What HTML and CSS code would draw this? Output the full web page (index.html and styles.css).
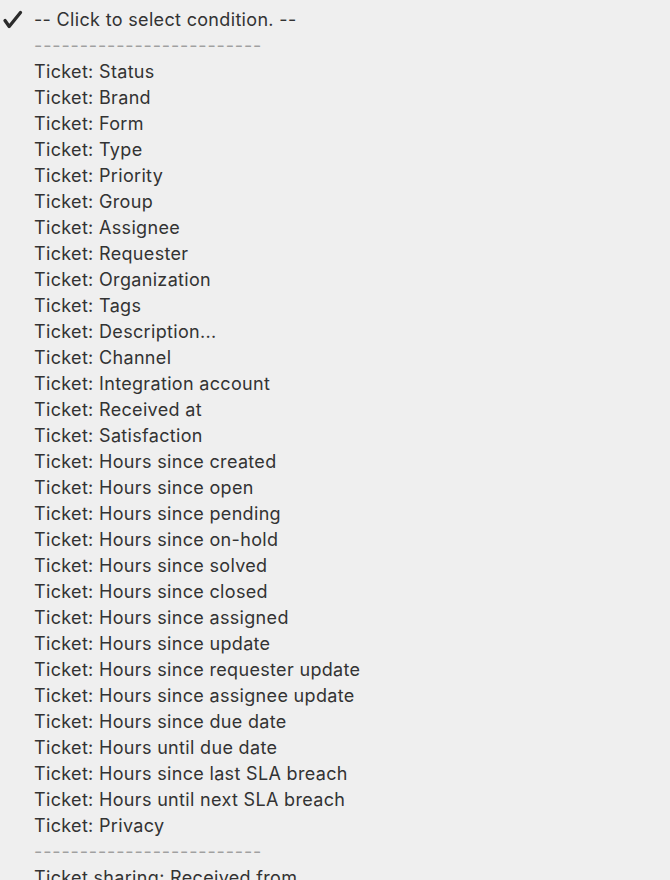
FILE: index.html
```html
<!DOCTYPE html>
<html>
<head>
<meta charset="utf-8">
<link rel="stylesheet" href="styles.css">
</head>
<body>
<ul class="menu">
  <li class="item selected"><span class="check"><svg viewBox="0 0 26 26" width="26" height="26"><path d="M5 14.5 L9.2 20.5 L20.5 6.5" fill="none" stroke="#2b2b2b" stroke-width="3.3" stroke-linecap="round" stroke-linejoin="round"/></svg></span>-- Click to select condition. --</li>
  <li class="item sep">-------------------------</li>
  <li class="item">Ticket: Status</li>
  <li class="item">Ticket: Brand</li>
  <li class="item">Ticket: Form</li>
  <li class="item">Ticket: Type</li>
  <li class="item">Ticket: Priority</li>
  <li class="item">Ticket: Group</li>
  <li class="item">Ticket: Assignee</li>
  <li class="item">Ticket: Requester</li>
  <li class="item">Ticket: Organization</li>
  <li class="item">Ticket: Tags</li>
  <li class="item">Ticket: Description...</li>
  <li class="item">Ticket: Channel</li>
  <li class="item">Ticket: Integration account</li>
  <li class="item">Ticket: Received at</li>
  <li class="item">Ticket: Satisfaction</li>
  <li class="item">Ticket: Hours since created</li>
  <li class="item">Ticket: Hours since open</li>
  <li class="item">Ticket: Hours since pending</li>
  <li class="item">Ticket: Hours since on-hold</li>
  <li class="item">Ticket: Hours since solved</li>
  <li class="item">Ticket: Hours since closed</li>
  <li class="item">Ticket: Hours since assigned</li>
  <li class="item">Ticket: Hours since update</li>
  <li class="item">Ticket: Hours since requester update</li>
  <li class="item">Ticket: Hours since assignee update</li>
  <li class="item">Ticket: Hours since due date</li>
  <li class="item">Ticket: Hours until due date</li>
  <li class="item">Ticket: Hours since last SLA breach</li>
  <li class="item">Ticket: Hours until next SLA breach</li>
  <li class="item">Ticket: Privacy</li>
  <li class="item sep">-------------------------</li>
  <li class="item">Ticket sharing: Received from</li>
</ul>
</body>
</html>
```
FILE: styles.css
```css
html, body {
  margin: 0;
  padding: 0;
  background: #efefef;
  overflow: hidden;
}
.menu {
  list-style: none;
  margin: 0;
  padding: 6px 0 0 0;
  font-family: Inter, "Noto Sans", sans-serif;
  font-size: 18px;
  letter-spacing: 0.33px;
  color: #333333;
}
.item {
  position: relative;
  height: 26px;
  line-height: 27px;
  padding-left: 34px;
  white-space: nowrap;
}
.sep {
  color: #a0a0a0;
  letter-spacing: 0.85px;
}
.check {
  position: absolute;
  left: 0;
  top: 0;
  width: 26px;
  height: 26px;
}
.check svg {
  display: block;
}
```
